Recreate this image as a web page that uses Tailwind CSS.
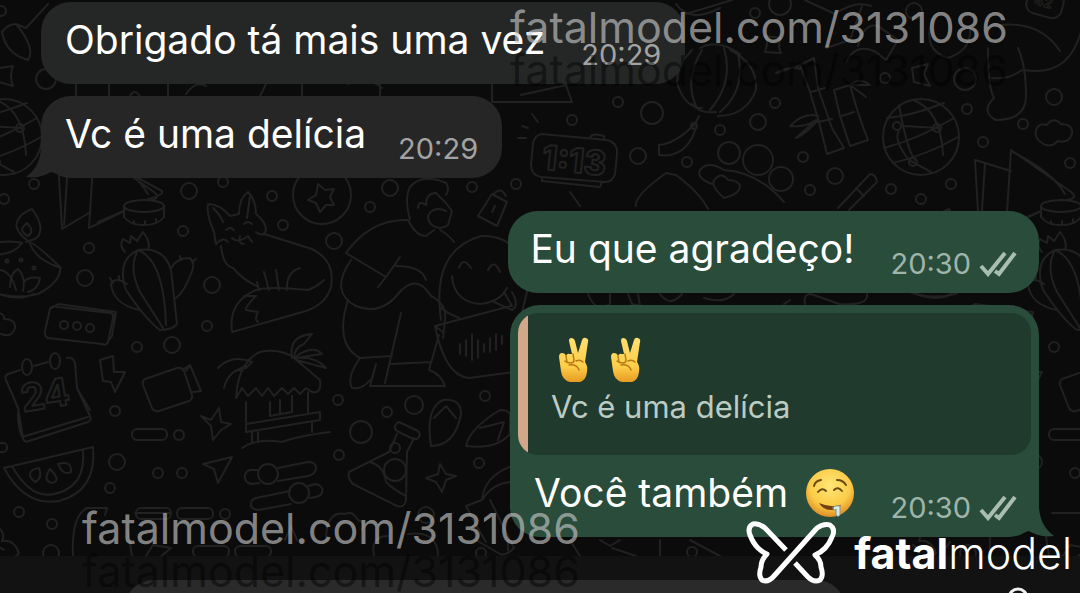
<!DOCTYPE html>
<html lang="pt-BR">
<head>
<meta charset="utf-8">
<meta name="viewport" content="width=device-width, initial-scale=1">
<title>Conversa</title>
<script src="https://cdn.jsdelivr.net/npm/@tailwindcss/browser@4"></script>
</head>
<body class="bg-[#0b0b0b] font-['Inter',sans-serif] text-white">
<main class="relative isolate flex h-screen flex-col overflow-hidden">

  <!-- Wallpaper doodles -->
  <svg class="absolute inset-0 -z-10 h-full w-full" viewBox="0 0 1080 593" preserveAspectRatio="xMinYMin slice" fill="none" stroke="#212121" stroke-width="2" stroke-linecap="round" stroke-linejoin="round" aria-hidden="true">
    <defs>
      <g id="repeat">
        <!-- globe -->
        <circle cx="4" cy="137" r="38"/>
        <path d="M-14 126l36 2M-30 118q24-2 57-15M-33 148q34-9 70-30M-24 163q34-8 65-26M-18 105Q-10 150 -2 160M-4 100Q24 110 26 155M-18 130Q-24 140 -8 160L14 172"/>
        <circle cx="20" cy="128" r="4"/><circle cx="-20" cy="126" r="4"/><circle cx="-4" cy="162" r="4"/>
        <!-- dots -->
        <circle cx="34" cy="184" r="5"/><circle cx="4" cy="199" r="5"/><circle cx="66" cy="142" r="5"/><circle cx="89" cy="248" r="5"/><circle cx="85" cy="278" r="8"/><circle cx="137" cy="347" r="5"/><circle cx="106" cy="124" r="5"/><circle cx="153" cy="163" r="5"/>
        <circle cx="115" cy="411" r="5"/><circle cx="179" cy="435" r="5"/><circle cx="117" cy="462" r="8"/><circle cx="158" cy="473" r="5"/><circle cx="182" cy="473" r="5"/><circle cx="110" cy="488" r="5"/><circle cx="19" cy="512" r="5"/><circle cx="52" cy="524" r="5"/><circle cx="51" cy="553" r="8"/>
        <!-- cloud -->
        <path d="M125 143q-8-5-6-13q3-8 11-5q6-9 14-1q12 0 11 10q-4 10-14 7q-8 8-16 2z"/>
        <!-- open book -->
        <path d="M58 160l4 69 27-16M58 160l36 11M64 225l4-62M94 150l-5 78 35-17M94 150l60 42q8 6-4 8M96 152q40 20 52 42M98 222l26-11"/>
        <!-- pot -->
        <ellipse cx="144" cy="206" rx="20" ry="6"/><path d="M124 206v11q6 8 20 8t20-8v-11M134 221v3M145 221v3M156 219v3"/>
        <!-- oil lamp -->
        <path d="M28 241q-16-12-10-21q3-7 14-11q12 16 7 26q-3 5-11 6zM28 236q-8-4-5-9l4-4q8 8 1 13M-10 243q22-3 32 0q-8 12-30 12M26 242q4-4 34 25q2 14-22 27q-24 6-45-2M30 244q6 16 31 24M-4 270q14-2 20 20M10 287q0-14 8-18q8 8 5 22M24 282q4-6 16-4q-2 12-12 14M-6 292q22 10 40 2"/>
        <circle cx="7" cy="261" r="1.500"/><circle cx="21" cy="260" r="1.500"/><circle cx="34" cy="268" r="1.500"/>
        <!-- cactus -->
        <path d="M160 330Q146 320 126 290Q116 260 138 250Q164 246 171 270L177 324Q172 330 160 330zM138 250Q128 268 140 292L163 328M138 250Q164 260 166 325M125 252q-6-6-2-13l7 4 1-7 6 5 6-9q8 10 5 18M171 268q6-10 18-10q8 4 1 18q-6 16-14 22M127 284q-12-8-16 0q2 20 28 26M113 283l-3-5M119 280v-4M181 260l-1-4M192 262l4-3"/>
        <!-- parcel -->
        <path d="M50 309q2-4 8-2l52 6q4 1 3 5l-5 24q-2 4-6 2l-54-6q-4-2-3-7zM50 309l8-5 58 8-4 24-5 7M113 316l3-3"/>
        <circle cx="64" cy="325" r="4"/><circle cx="77" cy="326" r="4"/><circle cx="90" cy="328" r="4"/>
        <path d="M-5 314q10-2 9 5q12 0 11 9q-3 10-14 6"/>
        <!-- calendar -->
        <path d="M20 370l-12 4q-4 2-2 6l12 28 5 30q1 5 6 3l59-19q4-2 2-6l-13-28-2-25q-2-6-8-5M34 366l14-4M18 413q0 14 4 24l66-20M78 390l12 20"/>
        <ellipse cx="27" cy="367" rx="5" ry="8"/><ellipse cx="55" cy="361" rx="5" ry="8"/>
        <text x="23" y="412" font-family="Inter" font-weight="700" font-size="38" transform="rotate(-9 23 412)" stroke-width="2">24</text>
        <!-- bolt -->
        <path d="M100 360l13-4 1 16 11 0-10 20-4-10-8-1z"/>
        <!-- camera -->
        <path d="M145 379l32-11q5-1 7 3l8 24q1 4-3 6l-30 10q-5 1-7-3l-9-23q-1-4 2-6zM184 369l6-4 11 26-8 1M190 365l-4 6"/>
        <rect x="132" y="429" width="35" height="11" rx="5"/>
        <rect x="-22" y="443" width="29" height="9" rx="4"/>
        <!-- melon slice -->
        <path d="M4 468l89-21q4 44-34 54q-34 6-55-33zM12 466q20 36 46 27q28-8 25-43M31 478q-4-8 8-10q4 10-4 14zM50 469q-8 12 2 14q10-2-2-14zM58 464q14-4 13 8q-8 4-13-8z"/>
        <!-- ghost shape and flower -->
        <path d="M73 556q-2-40 14-48l20 0-2 7M128 530l4 26M-4 526q10 6 6 15q12-2 17 12l-5 5M-4 545l8 5M135 513h35M146 556l7-11 18 3-12 10"/>
      </g>
    </defs>
    <use href="#repeat"/>
    <use href="#repeat" x="917"/>

    <!-- upper left -->
    <path d="M2 32q6-8 14-8l10 4L48 4M2 32q4 22 26 28q8-12-12-36M0 68l13-2q-4 10 0 20l-14-4M76 84v12M109 84v12M168 84v12M266 84l-6 12M302 84v12M348 84q20-8 34 4M380 84v12M492 84v18l80 0-6-17-45 10M130 96q4-8 10 0M186 94q10-14 20-8"/>
    <circle cx="46" cy="79" r="10"/><circle cx="1" cy="11" r="5"/>
    <circle cx="189" cy="191" r="8"/><circle cx="223" cy="182" r="5"/><circle cx="183" cy="231" r="5"/><circle cx="172" cy="345" r="8"/>
    <path d="M138 178l24 13q2 4-14 8"/>
    <!-- star ball -->
    <circle cx="322" cy="195" r="29"/><path d="M318 184l7 6 9-1-4 8 4 8-8 0-6 7-4-9-8-3 8-5z"/>
    <circle cx="272" cy="196" r="5"/><circle cx="283" cy="225" r="5"/><circle cx="334" cy="241" r="8"/><circle cx="212" cy="285" r="8"/><circle cx="207" cy="326" r="5"/><circle cx="390" cy="188" r="8"/><circle cx="370" cy="207" r="5"/><circle cx="472" cy="187" r="5"/><circle cx="516" cy="184" r="5"/>
    <!-- fox -->
    <path d="M216 244l-2-12q-8-18-6-28q12 0 22 12l9-2q0-16 9-22q8 8 8 22q10 8 10 16q-2 8-10 2M216 244q8-8 12-2M213 208q8 8 10 14M250 196l-3 22M226 230q4-4 8 0M244 224q4-4 8 0M232 238q6 6 16-2l4 6M240 236q-2 8 4 8M221 246q2 20 12 22q10 12 24 18M264 234l48 15q24 12 19 38q-6 20-32 26l-67 19q-4-30 24-42q12-4 52 0q10-4 16-10M257 282l2 8M264 272l5 18M276 270l3 20M300 268q-14 4-13 22M244 296l12 0q-12 12-10 14l12 2q-4 8 0 10"/>
    <!-- kneeling man -->
    <path d="M346 253q24-34 62-33M346 253l40 24 14-20M386 277l-8 10M351 260q-22 32 5 46q24 10 42-12q18-22 33 2q16 8 14 24l-2 18M396 266q26 0 30 14M348 300q-14 44 12 58l32-2M401 313l-16 70M360 358q-14 20-8 30q10 2 18-8M376 364l-6 22h75q-4-12-16-16l2-8-40 2M439 335l-8 28M410 219q-6-20 0-32q12-14 36-4q4 6 0 12M408 220q8 16 18 16l8-6M418 208q0-8 8-3q0-12 10-12l10 10 6 8-4 14q-8 6-16 0q-8-8 0-14 6-4 14 0M440 230q10 6 14 12"/>
    <!-- smiley -->
    <path d="M441 320q-10-70 40-84q44-2 46 56l-6 24M441 308q4 4 18 10M459 268q4-12 12 0M488 270q6-12 12 2M452 276q2 26 28 28q20-2 27-16M494 302l18 8q8-4 0-18M504 292l8 14M435 326l76-20M435 326q10 50 34 52l44-6M435 326l8 6M460 344v10M466 340v16M472 334v26M478 340v18M484 344v8M490 338v14M496 334v16M502 336v8"/>
    <!-- bell -->
    <path d="M478 216l14-22 15 8-10 24zM494 194q6-8 12 2M492 212l3-6"/>
    <!-- beach hut -->
    <path d="M236 398q2-36 24-46q20-4 34 6l26 22q2 14-8 12l-6-4-6 6-6-6-6 6-6-6-8 8-6-8-6 8-6-8-8 8-6-8zM218 368q14-14 34-6l-6 6q-18 2-22 20q4-18 24-22M292 358q-4-22 20-24l-8 10q-10 4-10 14q18-14 28-4l-26 4q20-2 30 10l-30-8M246 402v20M308 392v20M246 424l74-12v8l-74 12zM270 402v14l22-4v-16M280 400v14M252 432v10M258 432v10M312 422v10M242 448q14-10 40-6q16-6 48-10"/>
    <circle cx="338" cy="400" r="5"/>
    <path d="M201 416l10 4 8-12 2 14 10 2-10 6-8 10-2-14zM203 464l29-7-14 26-4-14z"/>
    <!-- sliders -->
    <path d="M258 470h-8q-6 2-5 8t8 6l6-1M278 468l30-6q8 0 8 6t-8 8l-30 5M290 491l-34 7q-6 2-5 8 2 4 8 4l32-6M308 486l8-2q8 2 6 9-2 4-12 5"/>
    <circle cx="268" cy="474" r="10"/><circle cx="299" cy="493" r="10"/>
    <rect x="136" y="508" width="35" height="11" rx="5"/><rect x="177" y="508" width="36" height="11" rx="5"/><circle cx="225" cy="514" r="5"/>
    <rect x="193" y="546" width="36" height="11" rx="5"/><rect x="235" y="546" width="36" height="11" rx="5"/>
    <path d="M285 540l6-14 6 14M326 540q0-30 20-26q6-4 12 6q8 2 4 10M374 556q-4-20 14-20M408 534q30-4 30 22"/>
    <!-- flask -->
    <path d="M399 422l19 9q3 3 1 6t-6 2l-16-8q-3-2-2-5t4-4zM397 434l-8 18-40 20q-2 6 4 12l44 22q8 2 9-6l1-48 7-14M370 462q14 4 16 20q8 8 20 14"/>
    <circle cx="395" cy="448" r="5"/><circle cx="395" cy="470" r="11"/><circle cx="361" cy="432" r="11"/><circle cx="414" cy="405" r="9"/><circle cx="387" cy="412" r="5"/><circle cx="339" cy="455" r="5"/><circle cx="485" cy="396" r="5"/><circle cx="479" cy="463" r="5"/><circle cx="426" cy="515" r="8"/>
    <!-- flip flops -->
    <path d="M431 446q-6-38 12-46q18-2 18 14q-6 32-30 32zM434 418l12-12 10 12M466 446q4-18 34-36q8 0 10 4v20q-14 16-44 12zM480 428l24-6-6 18"/>
    <path d="M426 478l12-4 2-10 6 10 10 2-10 4-4 12-6-10zM466 506l16-6q2-24 30-34M482 500q10-16 28-18M466 506q10 20 20 36M490 500l24 48q-8 8-14 6l-24-14"/>

    <!-- upper right -->
    <circle cx="755" cy="13" r="5"/><circle cx="780" cy="4" r="11"/><circle cx="914" cy="11" r="8"/><circle cx="885" cy="78" r="5"/><circle cx="965" cy="79" r="11"/><circle cx="967" cy="109" r="5"/><circle cx="1054" cy="97" r="8"/><circle cx="775" cy="103" r="5"/><circle cx="652" cy="113" r="11"/><circle cx="618" cy="102" r="5"/><circle cx="572" cy="120" r="5"/><circle cx="720" cy="130" r="5"/><circle cx="758" cy="122" r="8"/><circle cx="638" cy="156" r="8"/><circle cx="687" cy="162" r="5"/><circle cx="803" cy="157" r="5"/><circle cx="835" cy="176" r="8"/><circle cx="810" cy="190" r="5"/><circle cx="891" cy="189" r="5"/>
    <!-- lantern -->
    <path d="M692 50q-18 18-14 36q8 22 24 22M730 50q28 14 26 40q-10 26-38 26M702 50q-18 30-6 56M724 48q10 34-14 62M738 54q8 36-18 58M686 14l46-14M676 4q14 20 44 4M692 104q8 10 24 8M700 48q18-10 40 6M699 116l-4 8q-20 20-36 21v10q28 4 38-30"/>
    <circle cx="694" cy="126" r="3"/>
    <path d="M765 52q4-10 0-16l16 2q-4 8 0 15z"/>
    <!-- bamboo -->
    <path d="M800 65l14-7 4 30 14 40 12 20-17 6-8-32-9-30zM811 92l14-4M818 122l14-3M800 65l-24 8q16-8 24-4M834 90l16-5q8 30 18 55l-18 6-10-30zM842 116l12-4M850 85q10-8 20 0l-20 0 16 12M818 116q-14-4-28 10q14 2 26-6l-20 18q10-4 22-18"/>
    <!-- doodles behind the address -->
    <path d="M805 0l30 14q20-14 36-8M826 48l24-8 12-34M846 62q10-20 30-10l10 8 12-20-20-14q-14-4-20 20M932 20q-10 30 16 38q24-8 22-30M912 68l16-4-4 10 6 12-16-4zM988 48q0 40 6 50q-14 14 2 22q30 0 30-24q0-30-8-48M992 78q16 2 30-8M1024 70q46 8 58-42M1000 25q40-4 60 26"/>
    <rect x="1027" y="-10" width="36" height="26" rx="9" transform="rotate(15 1045 3)"/>
    <text x="1034" y="7" font-family="Inter" font-weight="700" font-size="14" transform="rotate(15 1045 3)" stroke-width="1">42</text>
    <!-- alarm clock -->
    <path d="M542 134l64 6q12 2 11 14l-2 20q-2 8-10 8l-64-5q-10-2-10-12l2-22q2-8 9-9zM590 138q2-6 14-2v4M542 177v4l58 6 2-5M538 122l-6-8M528 128l-6-2M526 138h-8"/>
    <text x="541" y="169" font-family="Inter" font-weight="800" font-size="34" transform="rotate(6 541 169)">1:13</text>
    <!-- hand with heart -->
    <circle cx="729" cy="153" r="11"/><circle cx="758" cy="160" r="15"/><circle cx="781" cy="179" r="12"/>
    <path d="M636 206q-2-10 30-33l10 2q24 18 32 34M724 198q-16-14-8-20q6-6 12 2q10 0 12 6q0 8-16 12zM712 184q-16-6-12-14q8-10 24 0q34 2 60 32M570 192l10 14M838 208l32-34q6 0 7 8l-28 28M856 188l8 8"/>
    <!-- between and below the bubbles -->
    <path d="M588 294q8 20 22 10v-10M628 294l4 10 8 2-2-12M660 294q10 14 22 0M704 298q20 6 30-4M790 300l-6 4M805 304q-2-10 6-10l28 10q30 2 28-10M920 295q16 6 30 0M508 540v10M570 540l10 16M600 540l10 6 10-6M612 548l24 8M660 540v16M690 540l30 16M940 556l10-14"/>
    <circle cx="481" cy="553" r="5"/><circle cx="692" cy="552" r="5"/>
  </svg>

  <!-- Messages -->
  <section class="flex flex-col px-[41px] pt-[2px]" aria-label="Mensagens">
    <article class="flex items-end gap-9 self-start rounded-[30px] bg-[#252726] pt-[14px] pr-6 pb-[11px] pl-6">
      <p class="mb-[9px] text-[39px] leading-[48px] whitespace-nowrap">Obrigado tá mais uma vez</p>
      <time class="text-[29px] leading-9 text-[#a3a3a3]">20:29</time>
    </article>

    <article class="relative mt-3 flex items-end gap-8 self-start rounded-[30px] bg-[#262626] pt-[14px] pr-6 pb-[11px] pl-6">
      <svg class="absolute bottom-0 -left-[15px] -z-10 h-12 w-12" viewBox="0 0 48 48" fill="#262626" aria-hidden="true"><path d="M15 0v16Q15 36 0 47q14 2 25-5l23 6V0z"/></svg>
      <p class="mb-[9px] text-[39px] leading-[48px] whitespace-nowrap">Vc é uma delícia</p>
      <time class="text-[29px] leading-9 text-[#a3a3a3]">20:29</time>
    </article>

    <article class="mt-[33px] flex items-end self-end rounded-[30px] bg-[#294c3b] pt-[14px] pr-[22px] pb-[11px] pl-[22px]">
      <p class="mr-9 mb-[9px] text-[39px] leading-[48px] whitespace-nowrap">Eu que agradeço!</p>
      <time class="text-[29px] leading-9 text-[#9fb5a9]">20:30</time>
      <svg class="mb-[5px] ml-2 h-[26px] w-[38px]" viewBox="0 0 38 26" fill="none" stroke="#a9bdb2" stroke-width="4" role="img" aria-label="Lida"><path d="M2 15l7 8L26 2M16 20l4 3L36 2"/></svg>
    </article>

    <article class="relative mt-3 flex min-w-[53%] flex-col self-end rounded-[30px] bg-[#294c3b] pt-2">
      <svg class="absolute -right-[15px] bottom-0 -z-10 h-12 w-12" viewBox="0 0 48 48" fill="#294c3b" aria-hidden="true"><path d="M33 0v16q0 20 15 31q-14 2-25-5L0 48V0z"/></svg>
      <blockquote class="mx-2 flex overflow-hidden rounded-[20px] bg-[#203a2d]">
        <span class="w-[10px] bg-[#d3a88a]"></span>
        <div class="px-[23px] pt-6 pb-7">
          <div class="flex h-[46px] gap-[22px] pl-2">
            <svg class="h-[46px] w-[30px]" viewBox="0 0 30 46" role="img" aria-label="Mão em V">
              <defs><linearGradient id="skin" x1="0" y1="0" x2="0" y2="1"><stop offset="0" stop-color="#ffdf70"/><stop offset=".65" stop-color="#fdce49"/><stop offset="1" stop-color="#e79b22"/></linearGradient></defs>
              <g id="victory">
                <path fill="url(#skin)" d="M10 4q0-3 2-3 3 0 4 3l3 12 4-13q1-3 4-2 3 1 2 4l-3 20q3 4 2 10-1 8-7 10H11Q3 43 2 34L0 20q0-4 3-4 3 0 4 3 1-3 4-2h2z"/>
                <path fill="none" stroke="#b67a17" stroke-width="1.500" stroke-linecap="round" d="M7 19l1 6M14 17l1 6q0 3-3 3-4 0-6-2M10 28q8-1 10 5M17 24q4-2 7 1"/>
              </g>
            </svg>
            <svg class="h-[46px] w-[30px]" viewBox="0 0 30 46" role="img" aria-label="Mão em V"><use href="#victory"/></svg>
          </div>
          <p class="mt-1 text-[31px] leading-10 whitespace-nowrap text-[#bccbc3]">Vc é uma delícia</p>
        </div>
      </blockquote>
      <div class="flex items-end pt-[14px] pr-[22px] pb-[11px] pl-6">
        <p class="mb-[9px] flex items-center gap-[18px] text-[39px] leading-[48px] whitespace-nowrap">Você também
          <svg class="h-12 w-12" viewBox="0 0 48 48" fill="none" stroke-linecap="round" role="img" aria-label="Rosto babando">
            <defs><radialGradient id="face" cx=".5" cy=".35" r=".65"><stop offset="0" stop-color="#ffe676"/><stop offset=".65" stop-color="#fbcb48"/><stop offset="1" stop-color="#e08d25"/></radialGradient></defs>
            <circle cx="24" cy="24" r="24" fill="url(#face)"/>
            <path stroke="#6b4a14" stroke-width="2" d="M8 17q1-5 7-6M31 11q6 0 9 5M12 23q4-5 8-1M28 21q4-4 8 1"/>
            <path fill="#70400f" d="M13 34q11 5 22 2-3 5-10 5-8 0-12-7z"/>
            <path fill="#dfe9df" stroke="#7f958d" stroke-width="1" d="M27 39q1-3 7-2v9q-3 3-4-1v-5q-1 3-3-1z"/>
          </svg>
        </p>
        <time class="ml-auto text-[29px] leading-9 text-[#9fb5a9]">20:30</time>
        <svg class="mb-[5px] ml-2 h-[26px] w-[38px]" viewBox="0 0 38 26" fill="none" stroke="#a9bdb2" stroke-width="4" role="img" aria-label="Lida"><path d="M2 15l7 8L26 2M16 20l4 3L36 2"/></svg>
      </div>
    </article>
  </section>

  <!-- Composer -->
  <footer class="mt-[19px] flex flex-1 items-start bg-[#121212] pt-6">
    <button class="flex h-[60px] w-[124px] shrink-0 justify-center" type="button" aria-label="Anexar">
      <svg class="mt-[9px] mr-2 w-8" viewBox="0 0 32 32" fill="none" stroke="#eee" stroke-width="3" stroke-linecap="round" aria-hidden="true"><path d="M16 3v26M3 16h26"/></svg>
    </button>
    <input class="h-[60px] min-w-0 flex-1 rounded-[30px] bg-[#2a2a2a] px-6 text-[31px] outline-none" type="text" aria-label="Mensagem">
    <button class="flex h-[60px] w-[234px] shrink-0 justify-end pr-11" type="button" aria-label="Gravar áudio">
      <svg class="mt-[7px] h-10 w-9" viewBox="0 0 36 40" fill="none" stroke="#eee" stroke-width="3" aria-hidden="true"><rect x="9" y="2" width="18" height="26" rx="9"/></svg>
    </button>
  </footer>

  <!-- Watermarks laid over the chat -->
  <p class="absolute top-[46px] left-[510px] text-[43px] leading-[48px] whitespace-nowrap text-black/45" aria-hidden="true">fatalmodel.com/3131086</p>
  <p class="absolute top-[3px] left-[510px] text-[43px] leading-[48px] whitespace-nowrap text-[#c8c8c8]/65">fatalmodel.com/3131086</p>
  <p class="absolute top-[547px] left-[82px] text-[43px] leading-[48px] whitespace-nowrap text-black/45" aria-hidden="true">fatalmodel.com/3131086</p>
  <p class="absolute top-[504px] left-[82px] text-[43px] leading-[48px] whitespace-nowrap text-[#c8c8c8]/65">fatalmodel.com/3131086</p>

  <div class="absolute right-[8px] bottom-[9px] flex items-center gap-[18px]">
    <svg class="h-[63px] w-[90px]" viewBox="0 0 90 63" fill="none" stroke="#fff" stroke-width="5" stroke-linejoin="round" aria-hidden="true">
      <path d="M40 29L19 7Q13 2 7 3Q1 6 4 14Q7 22 12 27Q16 31 21 33Q15 39 15 46Q12 55 16 59Q22 62 28 55L71 7Q78 2 84 4Q90 8 86 16Q81 29 69 34Q75 39 75 46Q78 55 74 59Q68 62 62 56L49 42"/>
    </svg>
    <p class="text-[43px] leading-[48px] font-light whitespace-nowrap"><b class="font-bold">fatal</b>model</p>
  </div>
</main>
</body>
</html>
